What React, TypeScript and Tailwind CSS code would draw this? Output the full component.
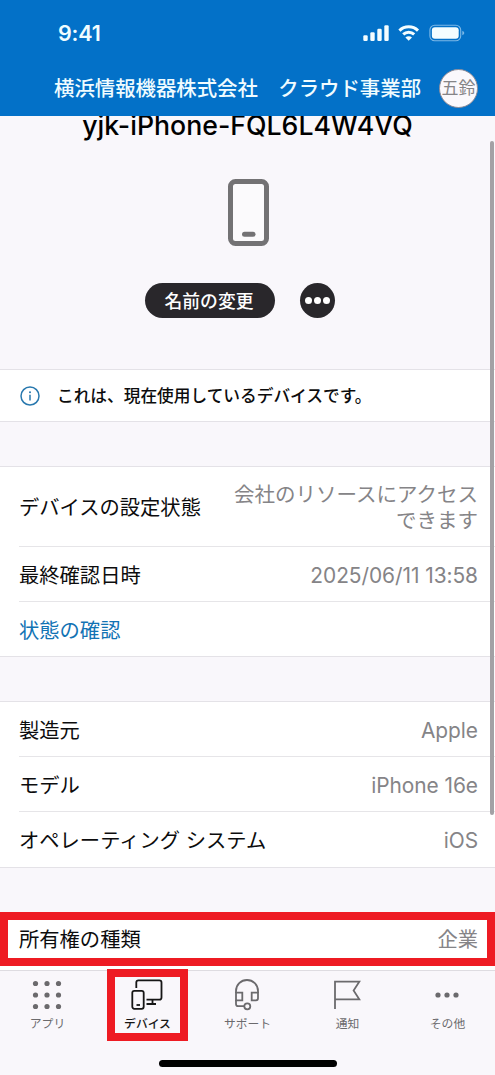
import { ReactNode, useState } from "react";
import clsx from "clsx";

type Row = {
  label: string;
  value?: string;
  isLink?: boolean;
  isTall?: boolean;
};

const statusRows: Row[] = [
  {
    label: "デバイスの設定状態",
    value: "会社のリソースにアクセスできます",
    isTall: true,
  },
  { label: "最終確認日時", value: "2025/06/11 13:58" },
  { label: "状態の確認", isLink: true },
];

const hardwareRows: Row[] = [
  { label: "製造元", value: "Apple" },
  { label: "モデル", value: "iPhone 16e" },
  { label: "オペレーティング システム", value: "iOS" },
];

function AppsIcon() {
  return (
    <svg width="32" height="32" viewBox="0 0 32 32" fill="currentColor">
      {[4.5, 16, 27.5].map((y) =>
        [4.5, 16, 27.5].map((x) => (
          <circle key={`${x}-${y}`} cx={x} cy={y} r="2.6" />
        ))
      )}
    </svg>
  );
}

function DevicesIcon() {
  return (
    <svg
      width="32"
      height="32"
      viewBox="0 0 32 32"
      fill="none"
      stroke="currentColor"
      strokeWidth="1.8"
    >
      <path d="M5.3 9V3.5Q5.3 1.3 7.5 1.3H28.3Q30.5 1.3 30.5 3.5V18.5Q30.5 20.7 28.3 20.7H15.5" />
      <path d="M21.5 20.7V25M15.5 25H25" />
      <rect x="1.3" y="11.8" width="11.4" height="18" rx="2" />
      <path d="M5.5 26H9" />
    </svg>
  );
}

function SupportIcon() {
  return (
    <svg
      width="32"
      height="32"
      viewBox="0 0 32 32"
      fill="none"
      stroke="currentColor"
      strokeWidth="1.8"
    >
      <path d="M5 14V12A11 11 0 0 1 27 12V14" />
      <path d="M5 13.7H11.3V21.3H5Z" />
      <path d="M27 13.7H20.7V21.3H25Q27 21.3 27 19.3Z" />
      <path d="M5 21V25Q5 27.2 7.2 27.2H13.3" />
      <circle cx="16.3" cy="27.3" r="3" />
    </svg>
  );
}

function FlagIcon() {
  return (
    <svg
      width="32"
      height="32"
      viewBox="0 0 32 32"
      fill="none"
      stroke="currentColor"
      strokeWidth="1.8"
    >
      <path d="M4 30V2.7H28.3L22.6 11.5L28.3 20.3H4" />
    </svg>
  );
}

function MoreIcon() {
  return (
    <svg width="32" height="32" viewBox="0 0 32 32" fill="currentColor">
      <circle cx="7" cy="16" r="2.6" />
      <circle cx="16" cy="16" r="2.6" />
      <circle cx="25" cy="16" r="2.6" />
    </svg>
  );
}

const tabs: { label: string; icon: ReactNode }[] = [
  { label: "アプリ", icon: <AppsIcon /> },
  { label: "デバイス", icon: <DevicesIcon /> },
  { label: "サポート", icon: <SupportIcon /> },
  { label: "通知", icon: <FlagIcon /> },
  { label: "その他", icon: <MoreIcon /> },
];

function StatusIcons() {
  return (
    <svg width="104" height="20" viewBox="0 0 104 20" fill="#f4fdff">
      <rect x="0.3" y="12.2" width="4.4" height="5.8" rx="1.2" />
      <rect x="7.3" y="9.2" width="4.4" height="8.8" rx="1.2" />
      <rect x="14.3" y="5.8" width="4.4" height="12.2" rx="1.2" />
      <rect x="21.3" y="2.2" width="4.4" height="15.8" rx="1.2" />
      <g fill="none" stroke="#f4fdff" strokeWidth="3">
        <path d="M36.4 7.6A13.4 13.4 0 0 1 55 7.6" />
        <path d="M40.2 11.4A8 8 0 0 1 51.2 11.4" />
      </g>
      <path d="M45.7 17.8L42.4 14.5A4.7 4.7 0 0 1 49 14.5Z" />
      <rect
        x="66.9"
        y="2.2"
        width="30.8"
        height="15.6"
        rx="4.8"
        fill="none"
        stroke="#7db8e6"
        strokeWidth="1.1"
      />
      <rect x="68.9" y="4.2" width="26.8" height="11.6" rx="3" />
      <path d="M99.3 7.8Q101.3 8.5 101.3 10Q101.3 11.5 99.3 12.2Z" fill="#7db8e6" />
    </svg>
  );
}

function DetailRow({ row, isLast }: { row: Row; isLast: boolean }) {
  return (
    <div
      className={clsx(
        "ml-[19px] flex items-center justify-between pr-[17px] leading-[26px]",
        row.isTall && "h-20 pt-[2px]",
        row.isLink && "h-[54px] pt-[3px]",
        !row.isTall && !row.isLink && "h-[55px] pt-[3px]",
        !isLast && "border-b border-[#e6e5e8]"
      )}
    >
      <span
        className={clsx(
          "whitespace-nowrap text-[20.3px]",
          row.isLink ? "text-[#1273b4]" : "text-[#0c0c0d]"
        )}
      >
        {row.label}
      </span>
      {row.value && (
        <span
          className={clsx(
            "max-w-[250px] text-right text-[#858487]",
            row.isTall ? "text-[20.5px]" : "text-[20.9px] tracking-[-0.05px]"
          )}
        >
          {row.value}
        </span>
      )}
    </div>
  );
}

function DetailGroup({ rows }: { rows: Row[] }) {
  return (
    <section className="mt-[44px] border-y border-[#e4e2e7] bg-white">
      {rows.map((row, index) => (
        <DetailRow
          key={row.label}
          row={row}
          isLast={index === rows.length - 1}
        />
      ))}
    </section>
  );
}

export default function App() {
  const [activeTab, setActiveTab] = useState<number>(1);

  return (
    <div
      lang="ja"
      className="relative flex h-[1075px] w-[495px] flex-col overflow-hidden bg-[#f9f7fb] font-['Inter','Noto_Sans_CJK_JP',sans-serif]"
    >
      <header className="h-[116px] shrink-0 bg-[#0371c8] text-[#f0fcff]">
        <div className="flex h-[66px] items-center justify-between pl-[58px] pr-[28px]">
          <span className="pt-px text-[21.5px] font-semibold leading-none tracking-[-0.2px]">
            9:41
          </span>
          <StatusIcons />
        </div>
        <div className="flex h-[44px] items-center justify-between pl-[54px] pr-[17px]">
          <h1 className="whitespace-nowrap pt-[2px] text-[20.4px] font-medium leading-none">
            横浜情報機器株式会社　クラウド事業部
          </h1>
          <div className="flex size-[39px] items-center justify-center rounded-full border border-[#8d8b98] bg-[#faf8fc] pt-px text-[17px] leading-none text-[#858487]">
            五鈴
          </div>
        </div>
      </header>

      <main className="min-h-0 flex-1 overflow-hidden">
        <div className="flex h-[253px] flex-col items-center">
          <h2 className="-mt-[7px] whitespace-nowrap text-[26.7px] font-medium leading-[32px] text-black">
            yjk-iPhone-FQL6L4W4VQ
          </h2>
          <svg
            className="mt-[37px] ml-px"
            width="43"
            height="70"
            viewBox="0 0 43 70"
            fill="none"
            stroke="#737274"
            strokeWidth="5"
          >
            <rect x="3.5" y="3.5" width="36" height="62" rx="5" fill="#fbfafc" />
            <path d="M17.5 56.3H26" strokeLinecap="round" />
          </svg>
          <div className="mt-[35px] flex items-center gap-[25px] pr-[15px]">
            <button className="h-[35px] w-[130px] rounded-full bg-[#29272b] pt-[2px] pr-[2px] text-[17.8px] font-medium leading-none text-white">
              名前の変更
            </button>
            <button className="flex size-[35px] items-center justify-center gap-[2px] rounded-full bg-[#29272b]">
              <span className="size-[7px] rounded-full bg-white" />
              <span className="size-[7px] rounded-full bg-white" />
              <span className="size-[7px] rounded-full bg-white" />
            </button>
          </div>
        </div>

        <div className="flex h-[53px] items-center border-y border-[#e4e2e7] bg-white pl-5">
          <svg
            width="20"
            height="20"
            viewBox="0 0 20 20"
            fill="none"
            stroke="#2878ae"
            strokeWidth="1.5"
          >
            <circle cx="10" cy="10" r="9" />
            <path d="M10 8.8V14.6" />
            <circle cx="10" cy="6.3" r="1" fill="#2878ae" stroke="none" />
          </svg>
          <p className="ml-[17px] pt-[2px] text-[16.7px] font-medium leading-none text-[#0c0c0d]">
            これは、現在使用しているデバイスです。
          </p>
        </div>

        <DetailGroup rows={statusRows} />
        <DetailGroup rows={hardwareRows} />

        <section className="mt-[44px] border-b-4 border-white bg-white">
          <div className="flex h-[54px] items-center justify-between border-8 border-[#ee1b23] pt-[3px] pl-[11px] pr-[9px] text-[20.3px] leading-none">
            <span className="text-[#0c0c0d]">所有権の種類</span>
            <span className="text-[#858487]">企業</span>
          </div>
        </section>
      </main>

      <nav className="flex h-[105px] shrink-0 flex-col items-center justify-between border-t border-[#dedce1] pb-[8px]">
        <div className="grid w-[500px] grid-cols-5">
          {tabs.map((tab, index) => (
            <button
              key={tab.label}
              onClick={() => setActiveTab(index)}
              className={clsx(
                "flex flex-col items-center pt-[8px] text-[11.8px] leading-[20px]",
                activeTab === index
                  ? "font-medium text-[#161616]"
                  : "text-[#6b6a6d]"
              )}
            >
              <span className="pr-px">{tab.icon}</span>
              <span className="mt-[3px]">{tab.label}</span>
            </button>
          ))}
        </div>
        <div className="h-[7px] w-[178px] rounded-full bg-black" />
      </nav>

      {/* highlight around the devices tab */}
      <div className="absolute left-[107px] top-[969px] h-[72px] w-[81px] border-8 border-[#ee1b23]" />
      {/* scroll thumb */}
      <div className="absolute right-px top-[141px] h-[674px] w-1 rounded-full bg-[#a3a1a5]" />
    </div>
  );
}
